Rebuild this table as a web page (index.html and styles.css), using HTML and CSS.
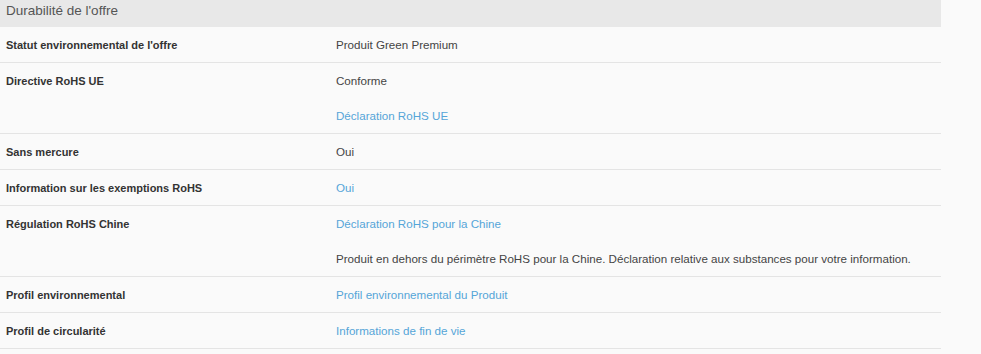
FILE: index.html
```html
<!DOCTYPE html>
<html lang="fr">
<head>
<meta charset="utf-8">
<title>Durabilité de l'offre</title>
<link rel="stylesheet" href="styles.css">
</head>
<body>
<section class="specs">
  <h2 class="specs-title">Durabilité de l'offre</h2>
  <dl class="specs-list">
    <div class="spec-row">
      <dt class="spec-label">Statut environnemental de l'offre</dt>
      <dd class="spec-values"><span class="spec-value">Produit Green Premium</span></dd>
    </div>
    <div class="spec-row">
      <dt class="spec-label">Directive RoHS UE</dt>
      <dd class="spec-values">
        <span class="spec-value">Conforme</span>
        <a class="spec-value spec-link" href="#">Déclaration RoHS UE</a>
      </dd>
    </div>
    <div class="spec-row">
      <dt class="spec-label">Sans mercure</dt>
      <dd class="spec-values"><span class="spec-value">Oui</span></dd>
    </div>
    <div class="spec-row">
      <dt class="spec-label">Information sur les exemptions RoHS</dt>
      <dd class="spec-values"><a class="spec-value spec-link" href="#">Oui</a></dd>
    </div>
    <div class="spec-row">
      <dt class="spec-label">Régulation RoHS Chine</dt>
      <dd class="spec-values">
        <a class="spec-value spec-link" href="#">Déclaration RoHS pour la Chine</a>
        <span class="spec-value">Produit en dehors du périmètre RoHS pour la Chine. Déclaration relative aux substances pour votre information.</span>
      </dd>
    </div>
    <div class="spec-row">
      <dt class="spec-label">Profil environnemental</dt>
      <dd class="spec-values"><a class="spec-value spec-link" href="#">Profil environnemental du Produit</a></dd>
    </div>
    <div class="spec-row">
      <dt class="spec-label">Profil de circularité</dt>
      <dd class="spec-values"><a class="spec-value spec-link" href="#">Informations de fin de vie</a></dd>
    </div>
  </dl>
</section>
</body>
</html>
```

FILE: styles.css
```css
html, body {
  margin: 0;
  padding: 0;
  background: #fafafa;
}

body {
  font-family: "Liberation Sans", Arial, sans-serif;
  color: #333;
}

.specs {
  width: 941px;
}

.specs-title {
  margin: 0;
  height: 27px;
  padding: 3px 6px 0;
  box-sizing: border-box;
  background: #e8e8e8;
  font-size: 13.5px;
  font-weight: normal;
  line-height: 16px;
  color: #555;
}

.specs-list {
  margin: 0;
}

.spec-row {
  display: grid;
  grid-template-columns: 330px 1fr;
  padding-left: 6px;
  border-bottom: 1px solid #e4e4e4;
}

.spec-label {
  height: 35px;
  display: flex;
  align-items: center;
  font-size: 11px;
  font-weight: bold;
  color: #333;
}

.spec-values {
  margin: 0;
  display: flex;
  flex-direction: column;
}

.spec-value {
  height: 35px;
  display: flex;
  align-items: center;
  font-size: 11.6px;
  color: #444;
  text-decoration: none;
}

.spec-link {
  color: #55a5d8;
}
```
